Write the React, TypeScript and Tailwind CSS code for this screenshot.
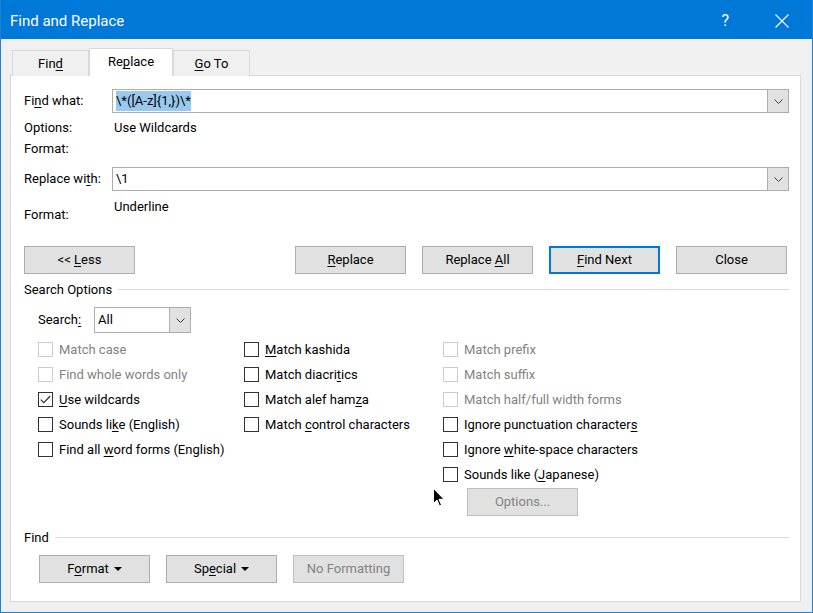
import React from "react";

const font = { fontFamily: 'Roboto, "Segoe UI", Arial, sans-serif' };

function U({ children }: { children: React.ReactNode }) {
  return <span className="underline underline-offset-[2px]">{children}</span>;
}

function Chevron() {
  return (
    <svg width="9" height="5" viewBox="0 0 9 5" className="text-[#404040]">
      <path d="M0.5 0.5 L4.5 4.5 L8.5 0.5" fill="none" stroke="currentColor" strokeWidth="1" />
    </svg>
  );
}

function Combo({ children }: { children: React.ReactNode }) {
  return (
    <div className="flex h-[24px] w-[677px] border border-[#adadad] bg-white">
      <div className="flex flex-1 items-center pl-[3px]">{children}</div>
      <div className="flex w-[21px] items-center justify-center border-l border-[#adadad] bg-[#e1e1e1]">
        <Chevron />
      </div>
    </div>
  );
}

function Btn({
  children,
  focused,
  disabled,
}: {
  children: React.ReactNode;
  focused?: boolean;
  disabled?: boolean;
}) {
  return (
    <div
      className={`flex h-[28px] w-[111px] items-center justify-center whitespace-nowrap bg-[#e1e1e1] ${
        focused ? "border-2 border-[#0078d7]" : disabled ? "border border-[#bfbfbf]" : "border border-[#adadad]"
      } ${disabled ? "text-[#838383]" : "text-black"}`}
    >
      <span className="flex items-center whitespace-pre">{children}</span>
    </div>
  );
}

function Caret() {
  return (
    <svg width="8" height="4" viewBox="0 0 8 4" className="ml-[5px]">
      <path d="M0 0 H8 L4 4 Z" fill="#000" />
    </svg>
  );
}

function Check({
  label,
  checked,
  disabled,
}: {
  label: React.ReactNode;
  checked?: boolean;
  disabled?: boolean;
}) {
  return (
    <div className="flex h-[25px] items-center whitespace-nowrap">
      <div
        className={`flex h-[15px] w-[15px] shrink-0 items-center justify-center border bg-white ${
          disabled ? "border-[#cccccc]" : "border-[#333333]"
        }`}
      >
        {checked && (
          <svg width="11" height="9" viewBox="0 0 11 9">
            <path d="M0.8 4.6 L3.8 7.6 L10.2 1" fill="none" stroke="#333" strokeWidth="1.2" />
          </svg>
        )}
      </div>
      <span className={`ml-[6px] ${disabled ? "text-[#838383]" : "text-black"}`}>{label}</span>
    </div>
  );
}

function Legend({ children }: { children: React.ReactNode }) {
  return (
    <div className="flex h-[21px] items-center">
      <span>{children}</span>
      <div className="ml-[6px] h-px flex-1 bg-[#dcdcdc]" />
    </div>
  );
}

export default function App() {
  return (
    <div
      style={font}
      className="relative flex h-[613px] w-[813px] flex-col border border-t-0 border-[#1883d7] bg-[#f0f0f0] text-[13px] text-black"
    >
      {/* Title bar */}
      <div className="flex h-[39px] items-center bg-[#0078d7] pl-[9px] pt-[3px] text-[15px] text-white">
        <span>Find and Replace</span>
        <span className="ml-auto mr-[46px] text-[16px]">?</span>
        <svg width="14" height="14" viewBox="0 0 14 14" className="mr-[23px]">
          <path d="M0.5 0.5 L13.5 13.5 M13.5 0.5 L0.5 13.5" stroke="#fff" strokeWidth="1.1" />
        </svg>
      </div>

      <div className="flex flex-1 flex-col pb-[10px] pl-[9px] pr-[11px]">
        {/* Tabs */}
        <div className="relative z-10 mt-[9px] flex h-[27px] items-end pl-[2px]">
          <div className="mb-[-1px] flex h-[26px] w-[77px] items-center justify-center border border-b-0 border-[#d9d9d9] bg-[#f0f0f0] pt-[1px]">
            <span>
              Fin<U>d</U>
            </span>
          </div>
          <div className="mb-[-1px] flex h-[28px] w-[84px] items-center justify-center border border-b-0 border-[#d9d9d9] bg-white pb-[1px]">
            <span>
              Re<U>p</U>lace
            </span>
          </div>
          <div className="mb-[-1px] flex h-[26px] w-[77px] items-center justify-center border border-b-0 border-[#d9d9d9] bg-[#f0f0f0] pt-[1px]">
            <span>
              <U>G</U>o To
            </span>
          </div>
        </div>

        {/* Panel */}
        <div className="flex flex-1 flex-col border border-[#d9d9d9] bg-white pl-[13px] pr-[11px] pt-[13px]">
          <div className="flex items-center whitespace-nowrap">
            <div className="w-[88px]">
              Fi<U>n</U>d what:
            </div>
            <Combo>
              <span className="bg-[#99c9ef] leading-[20px]">{"\\*([A-z]{1,})\\*"}</span>
            </Combo>
          </div>
          <div className="mt-[4px] flex h-[21px] items-center">
            <div className="w-[90px]">Options:</div>
            <div>Use Wildcards</div>
          </div>
          <div className="flex h-[21px] items-center">Format:</div>
          <div className="mt-[8px] flex items-center whitespace-nowrap">
            <div className="w-[88px]">
              Replace wi<U>t</U>h:
            </div>
            <Combo>
              <span>\1</span>
            </Combo>
          </div>
          <div className="mt-[4px] flex h-[30px]">
            <div className="w-[90px] pt-[9px] leading-[21px]">Format:</div>
            <div className="pt-[1px] leading-[21px]">Underline</div>
          </div>

          {/* Buttons */}
          <div className="mt-[21px] flex">
            <Btn>
              {"<< "}
              <U>L</U>ess
            </Btn>
            <div className="ml-auto mr-[2px] flex gap-[16px]">
              <Btn>
                <U>R</U>eplace
              </Btn>
              <Btn>
                {"Replace "}
                <U>A</U>ll
              </Btn>
              <Btn focused>
                <U>F</U>
                {"ind Next"}
              </Btn>
              <Btn>Close</Btn>
            </div>
          </div>

          <div className="mt-[5px]">
            <Legend>Search Options</Legend>
          </div>

          <div className="mt-[7px] flex items-center pl-[14px]">
            <div className="w-[56px]">
              Search<U>:</U>
            </div>
            <div className="flex h-[26px] w-[97px] border border-[#adadad] bg-white">
              <div className="flex flex-1 items-center pl-[3px]">All</div>
              <div className="flex w-[21px] items-center justify-center border-l border-[#adadad] bg-[#e1e1e1]">
                <Chevron />
              </div>
            </div>
          </div>

          {/* Checkbox columns */}
          <div className="mt-[4px] flex pl-[14px]">
            <div className="w-[206px]">
              <Check label="Match case" disabled />
              <Check label="Find whole words only" disabled />
              <Check
                checked
                label={
                  <>
                    <U>U</U>se wildcards
                  </>
                }
              />
              <Check
                label={
                  <>
                    Sounds li<U>k</U>e (English)
                  </>
                }
              />
              <Check
                label={
                  <>
                    Find all <U>w</U>ord forms (English)
                  </>
                }
              />
            </div>
            <div className="w-[199px]">
              <Check
                label={
                  <>
                    <U>M</U>atch kashida
                  </>
                }
              />
              <Check
                label={
                  <>
                    Match diacri<U>t</U>ics
                  </>
                }
              />
              <Check
                label={
                  <>
                    Match alef ham<U>z</U>a
                  </>
                }
              />
              <Check
                label={
                  <>
                    Match <U>c</U>ontrol characters
                  </>
                }
              />
            </div>
            <div>
              <Check label="Match prefix" disabled />
              <Check label="Match suffix" disabled />
              <Check label="Match half/full width forms" disabled />
              <Check
                label={
                  <>
                    Ignore punctuation character<U>s</U>
                  </>
                }
              />
              <Check
                label={
                  <>
                    Ignore <U>w</U>hite-space characters
                  </>
                }
              />
              <Check
                label={
                  <>
                    Sounds like (<U>J</U>apanese)
                  </>
                }
              />
              <div className="mt-[1px] pl-[24px]">
                <Btn disabled>Options...</Btn>
              </div>
            </div>
          </div>

          <div className="mt-[11px]">
            <Legend>Find</Legend>
          </div>

          <div className="mt-[7px] flex gap-[16px] pl-[15px]">
            <Btn>
              F<U>o</U>rmat
              <Caret />
            </Btn>
            <Btn>
              Sp<U>e</U>cial
              <Caret />
            </Btn>
            <Btn disabled>No Formatting</Btn>
          </div>
        </div>
      </div>

      {/* Mouse pointer */}
      <svg width="12" height="19" viewBox="0 0 12 19" className="absolute left-[432px] top-[488px]">
        <path d="M0.5 0.5 V15.5 L4 12 L6.5 18 L8.5 17 L6 11.3 H11 Z" fill="#000" stroke="#fff" strokeWidth="1" />
      </svg>
    </div>
  );
}
